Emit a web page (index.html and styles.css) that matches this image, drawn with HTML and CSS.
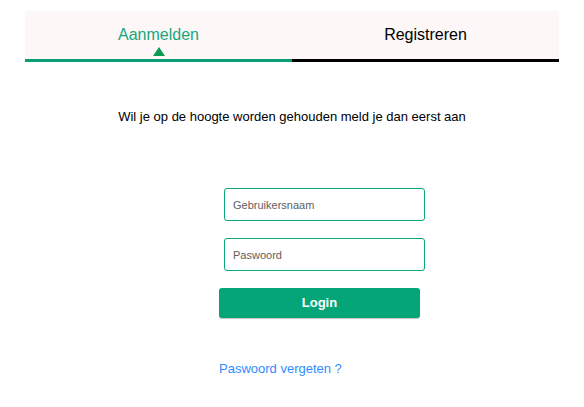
FILE: index.html
```html
<!DOCTYPE html>
<html lang="nl">
<head>
    <meta charset="UTF-8">
    <meta name="viewport" content="width=device-width, initial-scale=1.0">
    <title>Aanmelden</title>
    <link rel="stylesheet" href="styles.css">
</head>
<body>
    <div class="page">
        <!-- Tabs -->
        <div class="tabs">
            <div class="tab active">
                <span>Aanmelden</span>
                <span class="arrow"></span>
            </div>
            <div class="tab">
                <span>Registreren</span>
            </div>
        </div>

        <p class="intro">Wil je op de hoogte worden gehouden meld je dan eerst aan</p>

        <form class="login-form">
            <input type="text" placeholder="Gebruikersnaam">
            <input type="password" placeholder="Paswoord">
            <button type="button">Login</button>
        </form>

        <a class="forgot" href="#">Paswoord vergeten ?</a>
    </div>
</body>
</html>
```

FILE: styles.css
```css
body {
    margin: 0;
    font-family: "Liberation Sans", Arial, sans-serif;
    background-color: #ffffff;
    color: #000000;
}
.page {
    width: 534px;
    margin-left: 25px;
    padding-top: 11px;
}
.tabs {
    display: flex;
    background-color: #fdf8f7;
}
.tab {
    flex: 1;
    height: 51px; /* 48px tab + 3px underline */
    display: flex;
    flex-direction: column;
    align-items: center;
    padding-top: 15px;
    box-sizing: border-box;
    font-size: 16px;
    line-height: 18px;
    border-bottom: 3px solid #000000;
}
.tab.active {
    color: #18a57e;
    border-bottom-color: #0a9e76;
}
.tab .arrow {
    margin-top: 3px;
    width: 0;
    height: 0;
    border-left: 6px solid transparent;
    border-right: 6px solid transparent;
    border-bottom: 9px solid #0c9b56;
}
.intro {
    margin: 47px 0 0;
    text-align: center;
    font-size: 13px;
    line-height: 15px;
}
.login-form {
    display: flex;
    flex-direction: column;
    width: 201px;
    margin: 64px 0 0 194px;
}
.login-form input {
    width: 201px;
    height: 33px;
    margin: 0 0 17px 5px;
    padding: 0 8px;
    box-sizing: border-box;
    border: 1px solid #0aa87a;
    border-radius: 3px;
    font-family: inherit;
    font-size: 11px;
    color: #333333;
    outline: none;
}
.login-form input::placeholder {
    color: #5e5e5e;
}
.login-form button {
    width: 201px;
    height: 30px;
    padding: 0 0 2px;
    border: none;
    border-radius: 3px;
    background-color: #04a678;
    color: #ffffff;
    font-family: inherit;
    font-size: 13px;
    font-weight: bold;
    box-shadow: 0 1px 1px rgba(0, 0, 0, 0.25);
    cursor: pointer;
}
.forgot {
    display: block;
    margin: 43px 0 0 194px;
    font-size: 13px;
    line-height: 15px;
    color: #2f8cff;
    text-decoration: none;
}
```
